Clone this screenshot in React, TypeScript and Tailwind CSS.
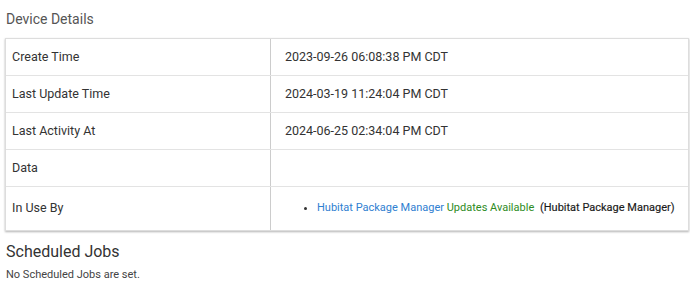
import React from "react";

const rows = [
  { label: "Create Time", value: "2023-09-26 06:08:38 PM CDT" },
  { label: "Last Update Time", value: "2024-03-19 11:24:04 PM CDT" },
  { label: "Last Activity At", value: "2024-06-25 02:34:04 PM CDT" },
  { label: "Data", value: "" },
];

const App = () => {
  return (
    <div className="w-[690px] h-[289px] bg-white overflow-hidden font-['Roboto',sans-serif]">
      <h2 className="pl-[6px] pt-[9px] text-[14px] leading-[20px] text-[#555]">Device Details</h2>
      <div className="ml-[5px] mr-[1px] mt-[9px] border border-[#ddd] shadow-[0_1px_2px_rgba(0,0,0,0.3)]">
        {rows.map((r) => (
          <div key={r.label} className="flex h-[37px] border-b border-[#e3e3e3]">
            <div className="w-[265px] border-r border-[#ccc] pl-[6px] flex items-center text-[12.5px] text-[#333]">
              {r.label}
            </div>
            <div className="flex-1 pl-[14px] flex items-center text-[12.5px] text-[#333]">{r.value}</div>
          </div>
        ))}
        {/* In Use By */}
        <div className="flex h-[43px]">
          <div className="w-[265px] border-r border-[#ccc] pl-[6px] flex items-center text-[12.5px] text-[#333]">
            In Use By
          </div>
          <div className="flex-1 flex items-center">
            <ul className="list-disc pl-[46px] text-[11px] text-[#333] whitespace-nowrap">
              <li>
                <span className="text-[#2f80d1]">Hubitat Package Manager</span>{" "}
                <span className="text-[#2e8b1e]">Updates Available</span>{" "}
                <span className="ml-[3px] text-[#1a1a1a] [-webkit-text-stroke:0.15px_#1a1a1a]">(Hubitat Package Manager)</span>
              </li>
            </ul>
          </div>
        </div>
      </div>
      <h3 className="pl-[6px] mt-[10px] text-[16px] leading-[22px] text-[#333]">Scheduled Jobs</h3>
      <p className="pl-[6px] mt-[4px] text-[11px] text-[#444]">No Scheduled Jobs are set.</p>
    </div>
  );
};

export default App;
